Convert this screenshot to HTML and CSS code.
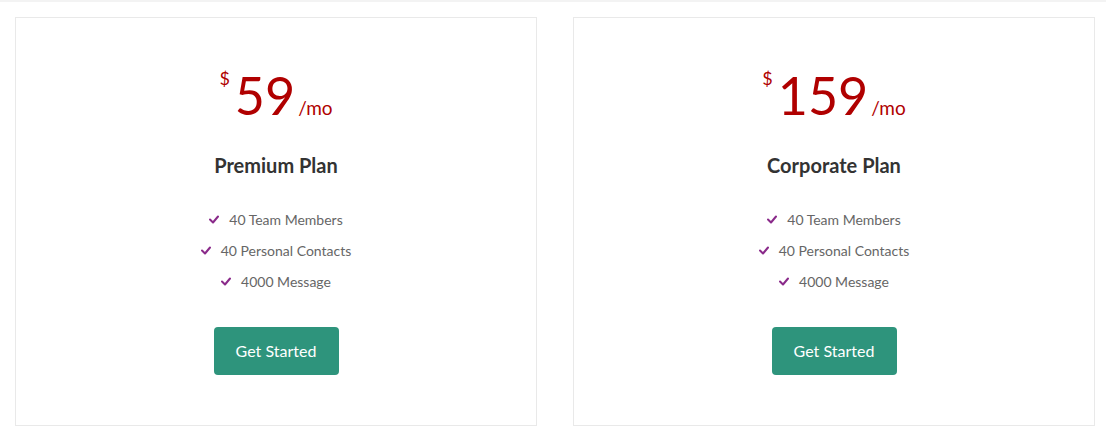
FILE: index.html
```html
<!DOCTYPE html>
<html lang="en">
<head>
<meta charset="utf-8">
<title>Pricing</title>
<link rel="stylesheet" href="styles.css">
</head>
<body>
<div class="topbar"></div>
<div class="plans">
  <div class="card">
    <div class="price"><span class="cur">$</span><span class="amt">59</span><span class="per">/mo</span></div>
    <h3 class="title">Premium Plan</h3>
    <ul class="features">
      <li><svg class="check" viewBox="0 0 10 9" width="10" height="9"><polyline points="1,4.5 4,7.5 9,1.5"/></svg>40 Team Members</li>
      <li><svg class="check" viewBox="0 0 10 9" width="10" height="9"><polyline points="1,4.5 4,7.5 9,1.5"/></svg>40 Personal Contacts</li>
      <li><svg class="check" viewBox="0 0 10 9" width="10" height="9"><polyline points="1,4.5 4,7.5 9,1.5"/></svg>4000 Message</li>
    </ul>
    <a class="btn" href="#">Get Started</a>
  </div>
  <div class="card">
    <div class="price"><span class="cur">$</span><span class="amt">159</span><span class="per">/mo</span></div>
    <h3 class="title">Corporate Plan</h3>
    <ul class="features">
      <li><svg class="check" viewBox="0 0 10 9" width="10" height="9"><polyline points="1,4.5 4,7.5 9,1.5"/></svg>40 Team Members</li>
      <li><svg class="check" viewBox="0 0 10 9" width="10" height="9"><polyline points="1,4.5 4,7.5 9,1.5"/></svg>40 Personal Contacts</li>
      <li><svg class="check" viewBox="0 0 10 9" width="10" height="9"><polyline points="1,4.5 4,7.5 9,1.5"/></svg>4000 Message</li>
    </ul>
    <a class="btn" href="#">Get Started</a>
  </div>
</div>
</body>
</html>
```

FILE: styles.css
```css
* { box-sizing: border-box; }
html, body { margin: 0; padding: 0; background: #fff; }
body { font-family: Lato, "Open Sans", Arial, sans-serif; }

.topbar { height: 2px; background: #f3f3f3; }

.plans {
  display: flex;
  gap: 36px;
  padding: 15px 0 0 15px;
}

.card {
  width: 522px;
  border: 1px solid #e9e9e9;
  padding: 51px 0 50px;
  display: flex;
  flex-direction: column;
  align-items: center;
}

.price {
  color: #b00000;
  line-height: 52px;
  height: 52px;
  white-space: nowrap;
}
.cur {
  font-size: 18px;
  line-height: 18px;
  vertical-align: top;
  margin-right: 5px;
}
.amt { font-size: 52px; }
.per { font-size: 19px; margin-left: 3px; }

.title {
  margin: 32px 0 0;
  font-size: 20px;
  line-height: 24px;
  font-weight: 700;
  color: #333;
}

.features {
  list-style: none;
  margin: 27px 0 0;
  padding: 0;
  text-align: center;
}
.features li {
  font-size: 14px;
  line-height: 31px;
  color: #666;
  display: flex;
  align-items: center;
  justify-content: center;
}
.check {
  margin-right: 10px;
  fill: none;
  stroke: #8a2a8a;
  stroke-width: 2;
  stroke-linecap: round;
  stroke-linejoin: round;
}

.btn {
  margin-top: 30px;
  display: block;
  width: 125px;
  height: 48px;
  line-height: 48px;
  text-align: center;
  background: #2e947c;
  color: #fff;
  font-size: 16px;
  border-radius: 4px;
  text-decoration: none;
}
```
